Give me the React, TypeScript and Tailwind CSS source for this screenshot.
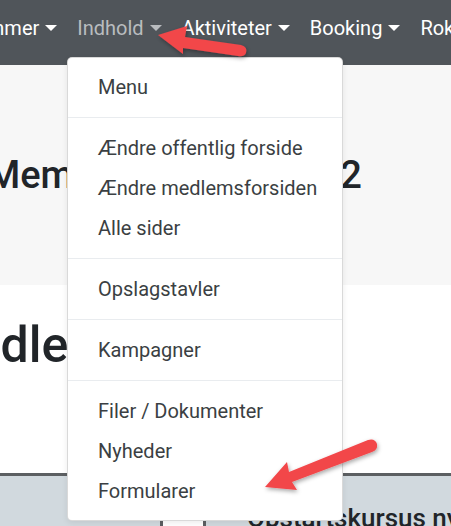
import React from "react";

const navItems = [
  { label: "Medlemmer", active: false },
  { label: "Indhold", active: true },
  { label: "Aktiviteter", active: false },
  { label: "Booking", active: false },
  { label: "Rokort", active: false },
];

const menuGroups: string[][] = [
  ["Menu"],
  ["Ændre offentlig forside", "Ændre medlemsforsiden", "Alle sider"],
  ["Opslagstavler"],
  ["Kampagner"],
  ["Filer / Dokumenter", "Nyheder", "Formularer"],
];

const Caret = () => (
  <span className="ml-[6px] inline-block h-0 w-0 border-x-[6px] border-t-[6px] border-x-transparent border-t-current align-middle" />
);

const Arrow: React.FC<{ d: string; className: string }> = ({ d, className }) => (
  <svg className={className} viewBox="0 0 451 526" width="451" height="526">
    <defs>
      <filter id="arrowShadow" x="-20%" y="-20%" width="140%" height="140%">
        <feDropShadow dx="1" dy="2" stdDeviation="2" floodColor="#000" floodOpacity="0.35" />
      </filter>
    </defs>
    <path d={d} fill="#f2464a" filter="url(#arrowShadow)" />
  </svg>
);

export default function App() {
  return (
    <div className="relative h-[526px] w-[451px] overflow-hidden bg-white font-['Roboto',sans-serif] text-[#212529]">
      <nav className="ml-[-78px] flex h-[65px] items-start bg-[#50555a] pt-[13px]">
        {navItems.map((item) => (
          <a
            key={item.label}
            className={`flex shrink-0 items-center whitespace-nowrap px-[10px] text-[20px] leading-[30px] ${
              item.active ? "text-[#b9bcbf]" : "text-white"
            }`}
          >
            {item.label}
            {item.label !== "Rokort" && <Caret />}
          </a>
        ))}
      </nav>

      <section className="flex h-[220px] items-center bg-[#f7f7f7]">
        <h2 className="ml-[-13px] whitespace-nowrap text-[38px] font-medium leading-[46px]">
          Member Dashboard<span className="ml-[18px]">2</span>
        </h2>
      </section>

      <h1 className="ml-[-70px] mt-[30px] whitespace-nowrap text-[50px] font-medium leading-[60px]">
        Medlemmer
      </h1>

      <div className="mt-[98px] flex gap-[40px]">
        <div className="h-[60px] w-[163px] shrink-0 border-r-[3px] border-t-[3px] border-[#5c5f62] bg-[#d1d9de]" />
        <div className="h-[60px] min-w-0 flex-1 overflow-hidden border-l-[3px] border-t-[3px] border-[#5c5f62] bg-[#d1d9de] pl-[41px] pt-[26px]">
          <p className="whitespace-nowrap text-[26px] font-medium leading-[32px]">Opstartskursus nye medlemmer</p>
        </div>
      </div>

      <div className="absolute left-[67px] top-[57px] w-[276px] rounded-[5px] border border-black/15 bg-white py-[9px] shadow-[0_2px_6px_rgba(0,0,0,0.08)]">
        {menuGroups.map((group, i) => (
          <div key={i}>
            {i > 0 && <div className="my-[10px] h-px bg-[#e9ecef]" />}
            {group.map((label) => (
              <a key={label} className="block whitespace-nowrap px-[30px] py-[5px] text-[20px] leading-[30px] text-[#3b3f43]">
                {label}
              </a>
            ))}
          </div>
        ))}
      </div>

      <Arrow
        className="pointer-events-none absolute left-0 top-0"
        d="M158 35 L187 26 L185 37 L241 45 Q248 47 246 53 Q244 57 238 56 L183 48 L183 54 Z"
      />
      <Arrow
        className="pointer-events-none absolute left-0 top-0"
        d="M265 487 L287 462 L289 472 L368 440 Q375 438 377 444 Q378 450 372 452 L292 482 L297 490 Z"
      />
    </div>
  );
}
